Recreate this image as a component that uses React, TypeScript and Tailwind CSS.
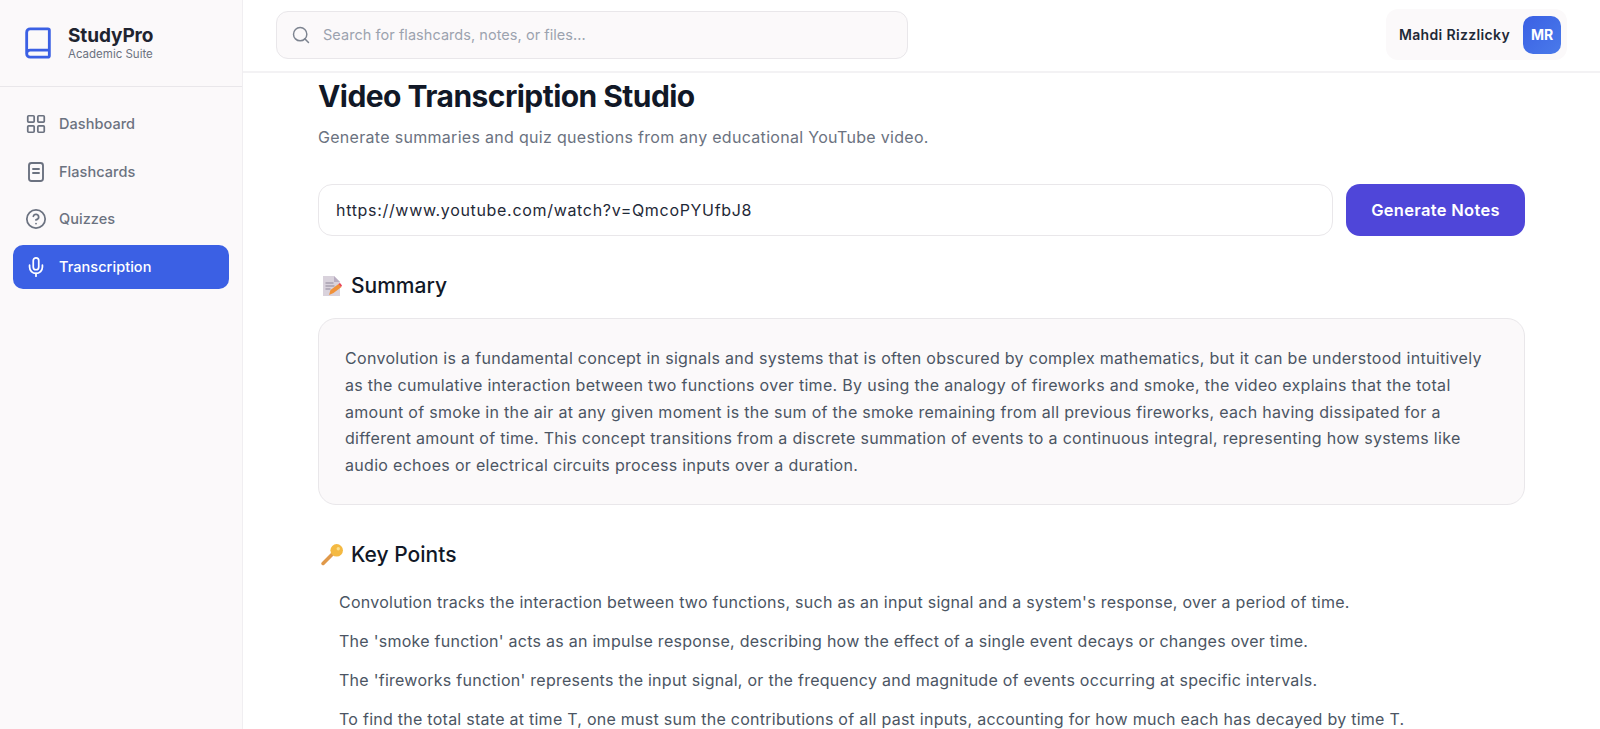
import { LayoutGrid, CircleHelp, Mic, Book, Search } from 'lucide-react';

function CardIcon({ className }: { className?: string }) {
  return (
    <svg viewBox="0 0 22 22" fill="none" stroke="currentColor" strokeWidth="1.9" strokeLinecap="round" className={className}>
      <rect x="4" y="2" width="14" height="18" rx="2.5" />
      <path d="M8 8h6M8 12h6" />
    </svg>
  );
}

const NAV = [
  { label: 'Dashboard', icon: LayoutGrid },
  { label: 'Flashcards', icon: CardIcon },
  { label: 'Quizzes', icon: CircleHelp },
  { label: 'Transcription', icon: Mic, active: true },
];

const KEY_POINTS = [
  "Convolution tracks the interaction between two functions, such as an input signal and a system's response, over a period of time.",
  "The 'smoke function' acts as an impulse response, describing how the effect of a single event decays or changes over time.",
  "The 'fireworks function' represents the input signal, or the frequency and magnitude of events occurring at specific intervals.",
  'To find the total state at time T, one must sum the contributions of all past inputs, accounting for how much each has decayed by time T.',
];

function MemoIcon() {
  return (
    <svg width="20" height="22" viewBox="0 0 20 22" className="shrink-0">
      <path d="M1 1h11l6 6v14H1z" fill="#d9d2dc" />
      <path d="M12 1l6 6h-6z" fill="#b9aec2" />
      <path d="M3.5 8h8M3.5 11h9M3.5 14h5" stroke="#8f8799" strokeWidth="1" />
      <path d="M7 20l1.5-5 8-6 3 3-8 6z" fill="#f0913a" />
      <path d="M16.5 9l1.5-1 2 2.5-1 1.5z" fill="#e8445a" />
    </svg>
  );
}

function KeyIcon() {
  return (
    <svg width="23" height="23" viewBox="0 0 22 22" className="shrink-0">
      <path d="M2 19.5l9-9" stroke="#e0994a" strokeWidth="3.4" strokeLinecap="round" />
      <circle cx="15" cy="7" r="6" fill="#f4b942" />
      <circle cx="16.5" cy="5.5" r="1.6" fill="#fbe08f" />
    </svg>
  );
}

export default function App() {
  return (
    <div className="flex h-[729px] overflow-hidden bg-white text-[#111827] font-['Inter',sans-serif]">
      {/* Sidebar */}
      <aside className="w-[243px] shrink-0 border-r border-[#f0eef1] bg-[#fbf9fa]">
        <div className="flex h-[87px] items-center gap-[13px] border-b border-[#e9e7ea] pl-[21px]">
          <Book className="size-[34px] text-[#3b60e4]" strokeWidth={2} />
          <div>
            <div className="text-[19px] font-bold leading-[20px] tracking-[-0.1px] text-[#1f2430]">StudyPro</div>
            <div className="mt-[2px] text-[11.5px] leading-[13px] text-[#6b7280]">Academic Suite</div>
          </div>
        </div>
        <nav className="flex flex-col gap-[3.5px] px-[13px] pt-[15px]">
          {NAV.map(item => {
            const Icon = item.icon;
            return (
              <div
                key={item.label}
                className={`flex h-[44px] items-center gap-[12px] rounded-[10px] pl-[12px] text-[14.5px] font-medium tracking-[0.05px] ${item.active ? 'bg-[#3b60e4] text-white' : 'text-[#6b7280]'}`}
              >
                <Icon className="size-[22px]" strokeWidth={1.9} />
                {item.label}
              </div>
            );
          })}
        </nav>
      </aside>

      <div className="flex min-w-0 flex-1 flex-col">
        {/* Header */}
        <header className="flex h-[73px] shrink-0 items-center justify-between border-b-2 border-[#f3f2f4] pb-[2px] pl-[33px] pr-[33px]">
          <div className="flex h-[48px] w-[632px] items-center gap-3 rounded-[12px] border border-[#e9e7ea] bg-[#fbf9fa] pl-[14px] text-[14.5px] tracking-[0.05px] text-[#9ca3af]">
            <Search className="size-[20px] text-[#7d8490]" strokeWidth={1.75} />
            Search for flashcards, notes, or files...
          </div>
          <div className="flex h-[51px] items-center gap-[13px] rounded-[12px] bg-[#fbf9fa] pl-[13px] pr-[6px]">
            <span className="text-[14px] font-semibold tracking-[0.35px] text-[#1f2937]">Mahdi Rizzlicky</span>
            <div className="flex size-[38px] items-center justify-center rounded-[10px] bg-gradient-to-br from-[#3b60e4] to-[#4a7aea] text-[14px] font-bold text-white">MR</div>
          </div>
        </header>

        {/* Content */}
        <main className="min-h-0 flex-1 overflow-hidden pl-[75px] pr-[75px] pt-[3px]">
          <h1 className="text-[30px] font-bold leading-[40px] tracking-[-0.55px] text-[#111827]">Video Transcription Studio</h1>
          <p className="mt-[9px] text-[16px] leading-[24px] tracking-[0.3px] text-[#6b7280]">Generate summaries and quiz questions from any educational YouTube video.</p>

          <div className="mt-[35px] flex gap-[13px]">
            <div className="flex h-[52px] flex-1 items-center rounded-[14px] border border-[#e9e7ea] pl-[17px] text-[16px] tracking-[0.68px] text-[#1f2937]">
              https://www.youtube.com/watch?v=QmcoPYUfbJ8
            </div>
            <div className="flex h-[52px] w-[179px] items-center justify-center rounded-[14px] bg-[#4f46d9] text-[16.5px] font-semibold tracking-[0.3px] text-white">Generate Notes</div>
          </div>

          <h2 className="mt-[36px] flex items-center gap-[9px] pl-[4px] text-[21px] font-medium leading-[28px] text-[#111827]">
            <MemoIcon />
            Summary
          </h2>

          <div className="mt-[18px] rounded-[18px] border border-[#e9e7ea] bg-[#fbf9fa] px-[26px] pb-[25px] pt-[26px] text-[16px] leading-[26.8px] tracking-[0.3px] text-[#4b5563]">
            Convolution is a fundamental concept in signals and systems that is often obscured by complex mathematics, but it can be understood intuitively as the cumulative interaction between two functions over time. By using the analogy of fireworks and smoke, the video explains that the total amount of smoke in the air at any given moment is the sum of the smoke remaining from all previous fireworks, each having dissipated for a different amount of time. This concept transitions from a discrete summation of events to a continuous integral, representing how systems like audio echoes or electrical circuits process inputs over a duration.
          </div>

          <h2 className="mt-[36px] flex items-center gap-[7px] pl-[3px] text-[21px] font-medium leading-[28px] text-[#111827]">
            <KeyIcon />
            Key Points
          </h2>

          <ul className="mt-[19px] flex flex-col gap-[11px] pl-[21px] text-[16px] leading-[28px] tracking-[0.26px] text-[#4b5563]">
            {KEY_POINTS.map(p => (
              <li key={p}>{p}</li>
            ))}
          </ul>
        </main>
      </div>
    </div>
  );
}
